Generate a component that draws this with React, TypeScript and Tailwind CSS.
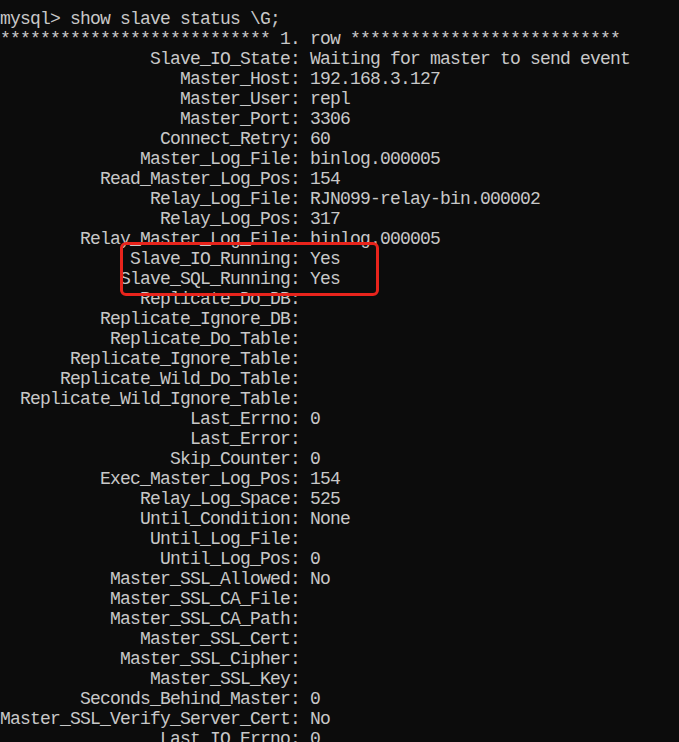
import React from "react";

const rows: [string, string][] = [
  ["Slave_IO_State", "Waiting for master to send event"],
  ["Master_Host", "192.168.3.127"],
  ["Master_User", "repl"],
  ["Master_Port", "3306"],
  ["Connect_Retry", "60"],
  ["Master_Log_File", "binlog.000005"],
  ["Read_Master_Log_Pos", "154"],
  ["Relay_Log_File", "RJN099-relay-bin.000002"],
  ["Relay_Log_Pos", "317"],
  ["Relay_Master_Log_File", "binlog.000005"],
  ["Slave_IO_Running", "Yes"],
  ["Slave_SQL_Running", "Yes"],
  ["Replicate_Do_DB", ""],
  ["Replicate_Ignore_DB", ""],
  ["Replicate_Do_Table", ""],
  ["Replicate_Ignore_Table", ""],
  ["Replicate_Wild_Do_Table", ""],
  ["Replicate_Wild_Ignore_Table", ""],
  ["Last_Errno", "0"],
  ["Last_Error", ""],
  ["Skip_Counter", "0"],
  ["Exec_Master_Log_Pos", "154"],
  ["Relay_Log_Space", "525"],
  ["Until_Condition", "None"],
  ["Until_Log_File", ""],
  ["Until_Log_Pos", "0"],
  ["Master_SSL_Allowed", "No"],
  ["Master_SSL_CA_File", ""],
  ["Master_SSL_CA_Path", ""],
  ["Master_SSL_Cert", ""],
  ["Master_SSL_Cipher", ""],
  ["Master_SSL_Key", ""],
  ["Seconds_Behind_Master", "0"],
  ["Master_SSL_Verify_Server_Cert", "No"],
  ["Last_IO_Errno", "0"],
];

export default function App() {
  const stars = "*".repeat(27);
  const lines = [
    "mysql> show slave status \\G;",
    `${stars} 1. row ${stars}`,
    ...rows.map(([k, v]) => `${(k + ":").padStart(30, " ")} ${v}`),
  ];
  return (
    <div className="relative h-[742px] w-full overflow-hidden bg-[#0c0c0c] pt-[9px] font-['Liberation_Mono',monospace] text-[18px] leading-[20px] tracking-[-0.8px] text-[#c8c8c8]">
      <div className="flex flex-col">
        {lines.map((l, i) => (
          <div key={i} className="h-[20px] whitespace-pre">
            {l}
          </div>
        ))}
      </div>
      <div className="absolute left-[120px] top-[242px] h-[54px] w-[259px] rounded-[6px] border-[3px] border-[#e8241c]" />
    </div>
  );
}
